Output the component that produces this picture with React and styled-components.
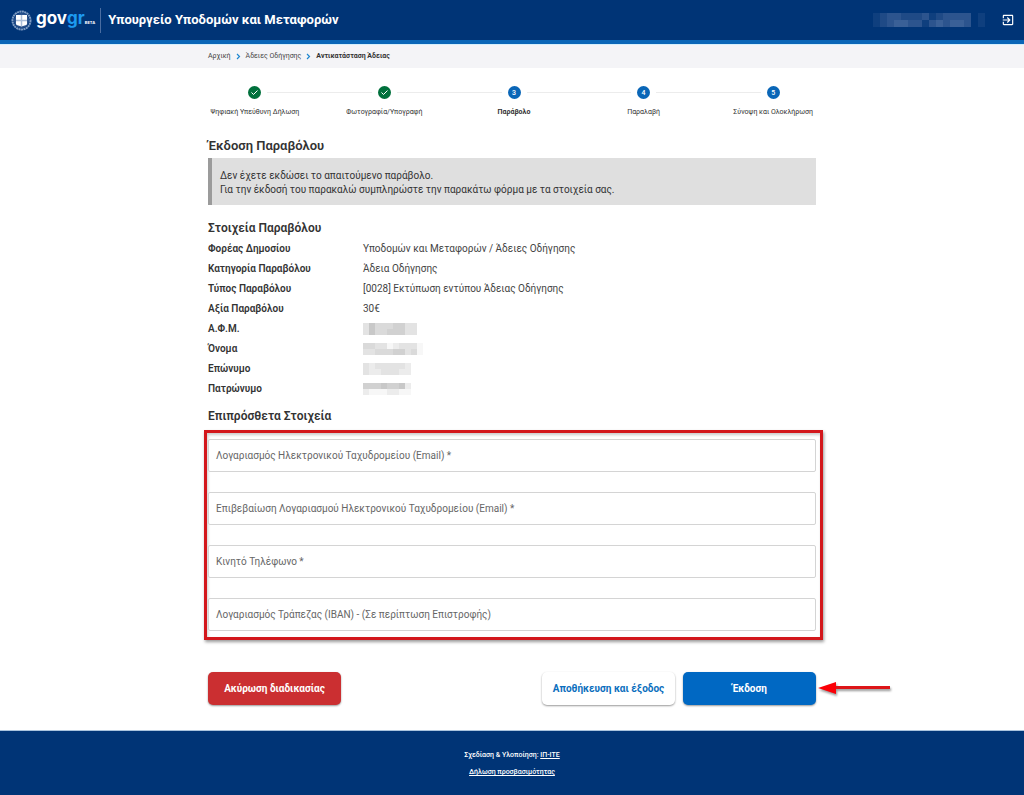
import React, { useState } from 'react'
import styled, { createGlobalStyle } from 'styled-components';

const GlobalStyle = createGlobalStyle`
  * {
    box-sizing: border-box;
  }
  body {
    margin: 0;
    background: #ffffff;
    color: #333333;
    font-family: Roboto, "Noto Sans", sans-serif;
    font-size: 10px;
    line-height: 14px;
  }
`;

const steps = [
    { label: 'Ψηφιακή Υπεύθυνη Δήλωση', done: true },
    { label: 'Φωτογραφία/Υπογραφή', done: true },
    { label: 'Παράβολο', current: true },
    { label: 'Παραλαβή' },
    { label: 'Σύνοψη και Ολοκλήρωση' },
];

// values with a mosaic are private and drawn as grey cells, one string per
// line of cells, a digit is how dark the cell is
const details = [
    { name: 'Φορέας Δημοσίου', value: 'Υποδομών και Μεταφορών / Άδειες Οδήγησης' },
    { name: 'Κατηγορία Παραβόλου', value: 'Άδεια Οδήγησης' },
    { name: 'Τύπος Παραβόλου', value: '[0028] Εκτύπωση εντύπου Άδειας Οδήγησης' },
    { name: 'Αξία Παραβόλου', value: '30€' },
    { name: 'Α.Φ.Μ.', mosaic: ['364445533', '364455533'] },
    { name: 'Όνομα', mosaic: ['4433123331', '3344455341'] },
    { name: 'Επώνυμο', mosaic: ['32333332', '32233322'] },
    { name: 'Πατρώνυμο', mosaic: ['55565562', '21112211'] },
];

const fields = [
    { id: 'email', type: 'email', label: 'Λογαριασμός Ηλεκτρονικού Ταχυδρομείου (Email) *' },
    { id: 'emailConfirm', type: 'email', label: 'Επιβεβαίωση Λογαριασμού Ηλεκτρονικού Ταχυδρομείου (Email) *' },
    { id: 'mobile', type: 'tel', label: 'Κινητό Τηλέφωνο *' },
    { id: 'iban', type: 'text', label: 'Λογαριασμός Τράπεζας (IBAN) - (Σε περίπτωση Επιστροφής)' },
];

const greys = ['#ffffff', '#f7f7f7', '#ececec', '#e3e3e3', '#dadada', '#d1d1d1', '#c8c8c8'];
const blues = ['#003476', '#0f3f7e', '#1f4a86', '#2c548e', '#3a6097', '#4a6da1', '#587aab'];

function Mosaic({ rows, colors, cell }) {
    return (
        <MosaicSvg width={rows[0].length * cell} height={rows.length * cell} shapeRendering="crispEdges" aria-hidden="true">
            {rows.map((row, y) => row.split('').map((level, x) => (
                <rect key={`${x}-${y}`} x={x * cell} y={y * cell} width={cell} height={cell} fill={colors[level]} />
            )))}
        </MosaicSvg>
    )
}

function Emblem() {
    return (
        <svg width="21" height="21" viewBox="0 0 42 42" aria-hidden="true">
            <circle cx="21" cy="21" r="18" fill="none" stroke="#7f9cc3" strokeWidth="4" strokeDasharray="4 1" />
            <circle cx="21" cy="21" r="15" fill="#2c548e" />
            <path d="M10 10h22v18c0 2-4 3-11 5-7-2-11-3-11-5z" fill="#ffffff" />
            <path d="M21 10v22M10 21h22" stroke="#a9bdd8" strokeWidth="3" />
        </svg>
    )
}

function ExitIcon() {
    return (
        <svg width="14" height="14" viewBox="0 0 24 24" fill="#ffffff" aria-hidden="true">
            <path d="M10.09 15.59L11.5 17l5-5-5-5-1.41 1.41L12.67 11H3v2h9.67l-2.58 2.59zM19 3H5c-1.11 0-2 .9-2 2v4h2V5h14v14H5v-4H3v4c0 1.1.89 2 2 2h14c1.1 0 2-.9 2-2V5c0-1.1-.9-2-2-2z" />
        </svg>
    )
}

function Chevron() {
    return (
        <svg width="5" height="7" viewBox="0 0 5 7" fill="none" stroke="#1d86d0" aria-hidden="true">
            <path d="M1 1l2.500 2.500-2.500 2.500" strokeWidth="1.200" />
        </svg>
    )
}

function Arrow() {
    return (
        <ArrowSvg width="80" height="18" viewBox="0 0 80 18" aria-hidden="true">
            <path d="M18 6h56v3H18z" fill="#dd1519" />
            <path d="M2 8L20 2v12z" fill="#fb0007" />
        </ArrowSvg>
    )
}

function App() {
    const [values, setValues] = useState({});

    const handleChange = (e) => {
        setValues({ ...values, [e.target.id]: e.target.value });
    }

    return (
        <Page>
            <GlobalStyle />
            <Header>
                <Emblem />
                <Brand>gov<BrandBlue>gr</BrandBlue><Beta>BETA</Beta></Brand>
                <Ministry>Υπουργείο Υποδομών και Μεταφορών</Ministry>
                <User>
                    <Mosaic rows={['1233222312333301', '1234433134344301']} colors={blues} cell={7} />
                </User>
                <ExitButton type="button" aria-label="Έξοδος"><ExitIcon /></ExitButton>
            </Header>

            <CrumbBar>
                <Crumbs aria-label="breadcrumb">
                    <CrumbLink href="#home">Αρχική</CrumbLink>
                    <Chevron />
                    <CrumbLink href="#licences">Άδειες Οδήγησης</CrumbLink>
                    <Chevron />
                    <CrumbCurrent>Αντικατάσταση Άδειας</CrumbCurrent>
                </Crumbs>
            </CrumbBar>

            <Main>
                <Stepper>
                    {steps.map((step, i) => (
                        <Step key={step.label}>
                            <StepTrack>
                                <StepLine $hidden={i === 0} />
                                <StepDot $done={step.done}>
                                    {step.done
                                        ? <svg width="9" height="9" viewBox="0 0 9 9" fill="none" stroke="#ffffff"><path d="M1.500 4.500l2 2 4-4" /></svg>
                                        : i + 1}
                                </StepDot>
                                <StepLine $hidden={i === steps.length - 1} />
                            </StepTrack>
                            <StepLabel $current={step.current}>{step.label}</StepLabel>
                        </Step>
                    ))}
                </Stepper>

                <Title>Έκδοση Παραβόλου</Title>
                <Notice>
                    Δεν έχετε εκδώσει το απαιτούμενο παράβολο.<br />
                    Για την έκδοσή του παρακαλώ συμπληρώστε την παρακάτω φόρμα με τα στοιχεία σας.
                </Notice>

                <SubTitle>Στοιχεία Παραβόλου</SubTitle>
                <Details>
                    <tbody>
                        {details.map(row => (
                            <tr key={row.name}>
                                <DetailName scope="row">{row.name}</DetailName>
                                <DetailValue>
                                    {row.mosaic ? <Mosaic rows={row.mosaic} colors={greys} cell={6} /> : row.value}
                                </DetailValue>
                            </tr>
                        ))}
                    </tbody>
                </Details>

                <SubTitle>Επιπρόσθετα Στοιχεία</SubTitle>
                <form onSubmit={(e) => e.preventDefault()}>
                    <Fields>
                        {fields.map(field => (
                            <Field key={field.id}>
                                <Input id={field.id} type={field.type} placeholder=" " value={values[field.id] || ''} onChange={handleChange} />
                                <FieldLabel htmlFor={field.id}>{field.label}</FieldLabel>
                            </Field>
                        ))}
                    </Fields>
                    <Actions>
                        <CancelButton type="button">Ακύρωση διαδικασίας</CancelButton>
                        <SaveButton type="button">Αποθήκευση και έξοδος</SaveButton>
                        <SubmitButton type="submit">Έκδοση</SubmitButton>
                        <Arrow />
                    </Actions>
                </form>
            </Main>

            <Footer>
                <FooterLine>Σχεδίαση &amp; Υλοποίηση: <FooterLink href="#ite">ΙΠ-ΙΤΕ</FooterLink></FooterLine>
                <FooterLine><FooterLink href="#accessibility">Δήλωση προσβασιμότητας</FooterLink></FooterLine>
            </Footer>
        </Page>
    )
}

const Page = styled.div`
  display: flex;
  flex-direction: column;
  min-height: 100vh;
`;

const Header = styled.header`
  display: flex;
  align-items: center;
  height: 44px;
  padding: 0 9px 0 11px;
  background: #003476;
  border-bottom: 4px solid #0a66b7;
  color: #ffffff;
`;

const Brand = styled.div`
  display: flex;
  align-items: baseline;
  margin-left: 4px;
  padding-right: 5px;
  border-right: 1px solid #4a6da1;
  font-family: Inter, "Noto Sans", sans-serif;
  font-size: 17px;
  font-weight: 700;
  line-height: 20px;
`;

const BrandBlue = styled.span`
  color: #1d9bf0;
`;

const Beta = styled.span`
  font-size: 4px;
`;

const Ministry = styled.div`
  margin-left: 7px;
  font-size: 13px;
  font-weight: 700;
  line-height: 20px;
`;

const User = styled.div`
  margin-left: auto;
`;

const ExitButton = styled.button`
  display: flex;
  margin-left: 16px;
  padding: 0;
  border: none;
  background: none;
  cursor: pointer;
`;

const MosaicSvg = styled.svg`
  display: block;
`;

const CrumbBar = styled.div`
  padding: 4px 16px 5px;
  border-top: 1px solid #d5effc;
  background: #f4f4f7;
`;

const Crumbs = styled.nav`
  display: flex;
  align-items: center;
  gap: 5px;
  max-width: 608px;
  margin: 0 auto;
  font-size: 7px;
`;

const CrumbLink = styled.a`
  color: #444444;
  text-decoration: none;
`;

const CrumbCurrent = styled.span`
  font-weight: 700;
`;

const Main = styled.main`
  flex: 1;
  width: 100%;
  max-width: 608px;
  margin: 0 auto;
  padding: 18px 0 25px;
`;

const Stepper = styled.ol`
  display: grid;
  grid-template-columns: repeat(5, 1fr);
  margin: 0 -22px 0 -18px;
  padding: 0;
  list-style: none;
`;

const Step = styled.li`
  display: flex;
  flex-direction: column;
  gap: 6px;
`;

const StepTrack = styled.div`
  display: flex;
  align-items: center;
  gap: 6px;
`;

const StepLine = styled.span`
  flex: 1;
  height: 1px;
  background: ${props => props.$hidden ? 'transparent' : '#ececec'};
`;

const StepDot = styled.span`
  display: flex;
  align-items: center;
  justify-content: center;
  width: 13px;
  height: 13px;
  border-radius: 50%;
  background: ${props => props.$done ? '#00703c' : '#0a66b7'};
  color: #ffffff;
  font-size: 7px;
  font-weight: 500;
`;

const StepLabel = styled.span`
  font-size: 7px;
  font-weight: ${props => props.$current ? 700 : 400};
  text-align: center;
  white-space: nowrap;
`;

const Title = styled.h1`
  margin: 18px 0 3px;
  font-size: 13px;
  font-weight: 600;
  line-height: 18px;
`;

const Notice = styled.p`
  margin: 0 0 14px;
  padding: 11px 8px 8px;
  border-left: 4px solid #9b9b9b;
  background: #dfdfdf;
`;

const SubTitle = styled.h2`
  margin: 0;
  font-size: 12px;
  font-weight: 600;
  line-height: 18px;
`;

const Details = styled.table`
  width: 100%;
  margin: 2px 0 8px;
  border-collapse: collapse;
`;

const DetailName = styled.th`
  width: 155px;
  height: 20px;
  padding: 0;
  font-weight: 600;
  text-align: left;
`;

const DetailValue = styled.td`
  padding: 0;
  color: #444444;
`;

const Fields = styled.div`
  display: flex;
  flex-direction: column;
  gap: 20px;
  margin: 5px -7px 0 -4px;
  padding: 6px 4px 6px 1px;
  border: 3px solid #d3171c;
  box-shadow: 1px 2px 3px rgba(0, 0, 0, 0.4), inset 1px 2px 3px rgba(0, 0, 0, 0.2);
`;

const Field = styled.div`
  display: grid;
  align-items: center;
`;

const Input = styled.input`
  grid-area: 1 / 1;
  width: 100%;
  height: 33px;
  padding: 0 8px;
  border: 1px solid #d4d4d4;
  border-radius: 2px;
  background: #ffffff;
  font: inherit;
`;

const FieldLabel = styled.label`
  grid-area: 1 / 1;
  padding-left: 8px;
  color: #666666;
  pointer-events: none;

  ${Input}:not(:placeholder-shown) + & {
    visibility: hidden;
  }
`;

const Actions = styled.div`
  position: relative;
  display: flex;
  gap: 8px;
  margin-top: 32px;
`;

const Button = styled.button`
  width: 133px;
  height: 33px;
  padding: 0;
  border: none;
  border-radius: 5px;
  box-shadow: 0 1px 2px rgba(0, 0, 0, 0.4);
  font: inherit;
  font-weight: 700;
  cursor: pointer;
`;

const CancelButton = styled(Button)`
  margin-right: auto;
  background: #cb2f31;
  color: #ffffff;
`;

const SaveButton = styled(Button)`
  background: #ffffff;
  color: #0a6ebd;
`;

const SubmitButton = styled(Button)`
  background: #0068c3;
  color: #ffffff;
`;

// points at the submit button from the page margin
const ArrowSvg = styled.svg`
  position: absolute;
  top: 8px;
  left: 100%;
  filter: drop-shadow(1px 2px 1px rgba(0, 0, 0, 0.4));
`;

const Footer = styled.footer`
  padding: 17px 16px 13px;
  border-top: 1px solid #a9c3de;
  background: #003476;
  color: #ffffff;
  font-size: 7px;
  font-weight: 500;
  text-align: center;
`;

const FooterLine = styled.p`
  margin: 0 0 3px;
`;

const FooterLink = styled.a`
  color: inherit;
`;

export default App;
